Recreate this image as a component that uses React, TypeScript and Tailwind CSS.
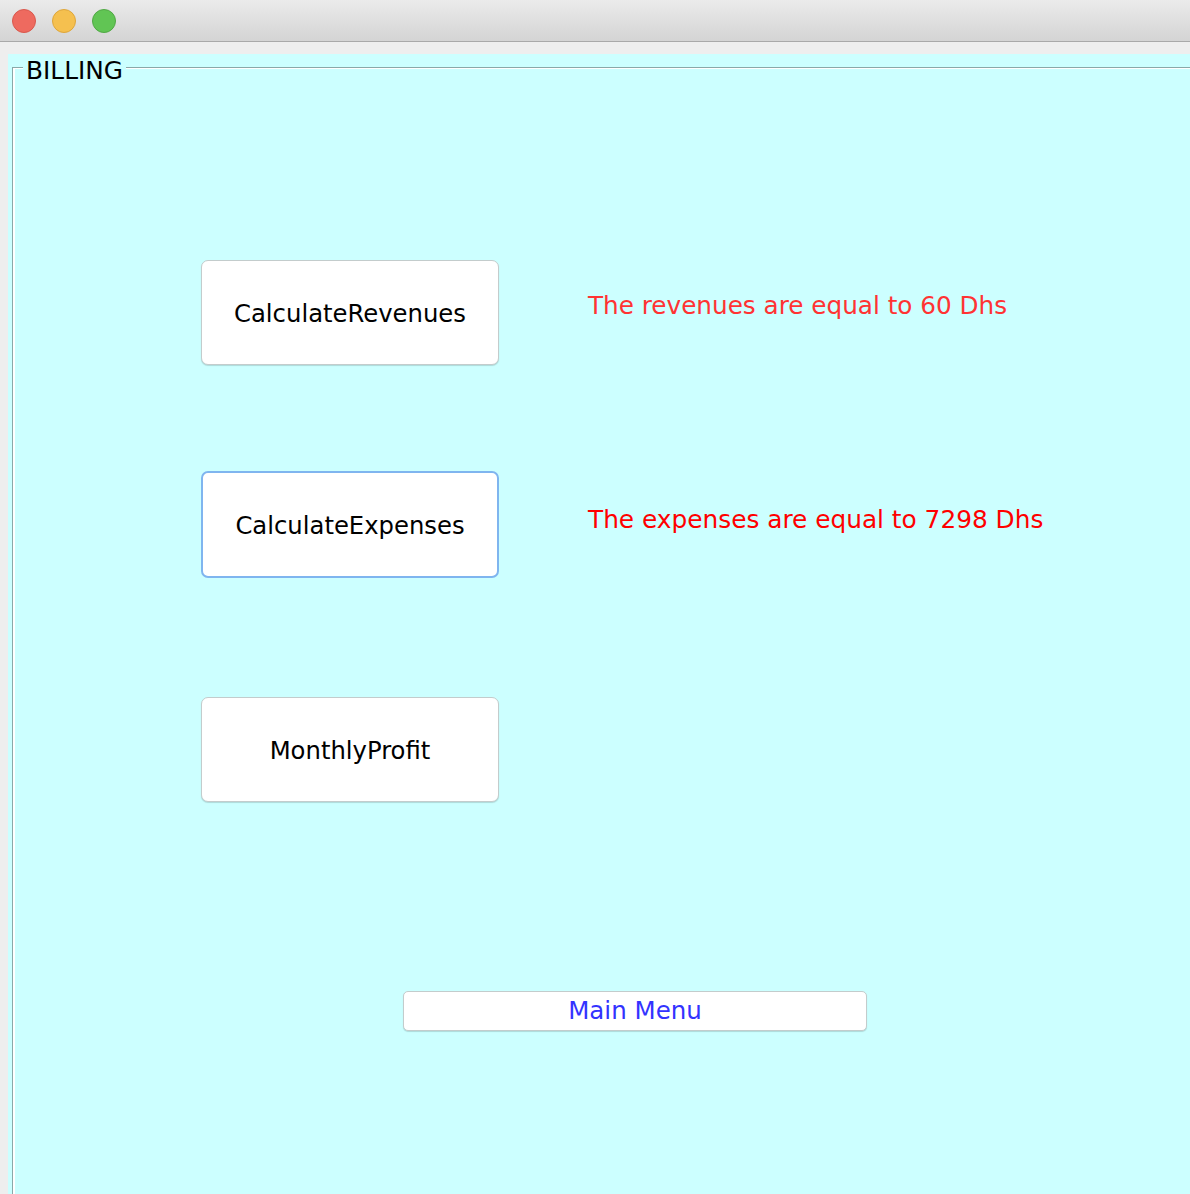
export default function App() {
  const font = { fontFamily: '"DejaVu Sans", "Liberation Sans", sans-serif' };

  return (
    <div className="flex flex-col w-[1190px] h-[1194px] overflow-hidden bg-[#eeeeee]" style={font}>
      {/* window title bar */}
      <div className="flex items-center gap-[16px] h-[42px] shrink-0 px-[12px] border-b border-[#a9a9a9] bg-gradient-to-b from-[#ebebeb] to-[#d4d4d4]">
        <span className="w-[24px] h-[24px] rounded-full bg-[#ee6a5f] border border-[#d9584d]" />
        <span className="w-[24px] h-[24px] rounded-full bg-[#f5c04f] border border-[#dea63b]" />
        <span className="w-[24px] h-[24px] rounded-full bg-[#61c554] border border-[#51a845]" />
      </div>

      <div className="flex-1 pl-[8px] pt-[12px]">
        <div className="h-full bg-[#ccffff] pl-[4px] pt-[13px]">
          <div className="relative h-full border-l border-t border-[#8aa8a8]">
            <span className="absolute left-[10px] top-[-11px] px-[3px] bg-[#ccffff] text-[24.8px] leading-[28px] text-black">
              BILLING
            </span>
            <div className="h-full border-l-2 border-t border-white pl-[186px] pt-[191px]">
              <div className="flex items-center gap-[89px]">
                <button className="w-[298px] h-[105px] pt-[3px] rounded-[7px] bg-white border border-[#c3cccc] shadow-[0_1px_1px_rgba(0,0,0,0.15)] text-[24.3px] text-black">
                  CalculateRevenues
                </button>
                <span className="pb-[14px] text-[24.7px] text-[#ff3333]">The revenues are equal to 60 Dhs</span>
              </div>

              <div className="flex items-center gap-[89px] mt-[106px]">
                <button className="w-[298px] h-[107px] pt-[3px] rounded-[7px] bg-white border-2 border-[#7fb5ef] text-[24.3px] text-black">
                  CalculateExpenses
                </button>
                <span className="pb-[10px] text-[24.8px] text-[#ff0000]">The expenses are equal to 7298 Dhs</span>
              </div>

              <div className="mt-[119px]">
                <button className="w-[298px] h-[105px] pt-[3px] rounded-[7px] bg-white border border-[#c3cccc] shadow-[0_1px_1px_rgba(0,0,0,0.15)] text-[24.3px] text-black">
                  MonthlyProfit
                </button>
              </div>

              <div className="mt-[189px] pl-[202px]">
                <button className="w-[464px] h-[40px] rounded-[5px] bg-white border border-[#c3cccc] shadow-[0_1px_1px_rgba(0,0,0,0.15)] text-[24.5px] leading-none text-[#3333ff]">
                  Main Menu
                </button>
              </div>
            </div>
          </div>
        </div>
      </div>
    </div>
  );
}
